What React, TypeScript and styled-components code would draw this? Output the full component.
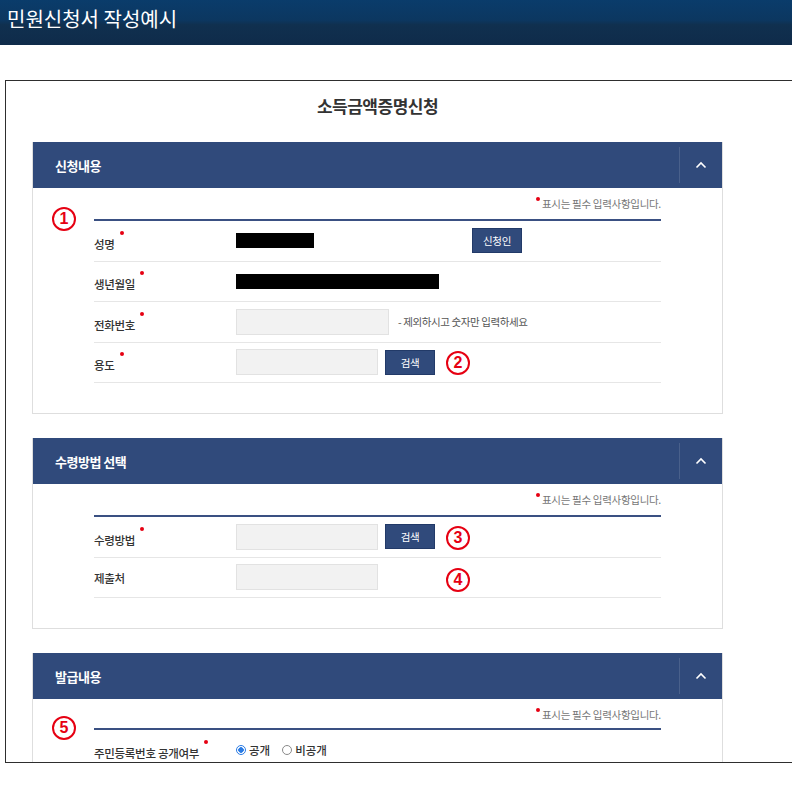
import React from 'react';
import styled, { createGlobalStyle } from 'styled-components';

const colors = {
  navy: '#304a7b',
  navyDark: '#223a68',
  red: '#e60012',
  text: '#333333',
  muted: '#777777',
  line: '#e6e6e6',
  inputBg: '#f2f2f2',
};

const GlobalStyle = createGlobalStyle`
  html, body {
    margin: 0;
    padding: 0;
    background: #ffffff;
    overflow: hidden;
    font-family: "Noto Sans CJK KR", "Noto Sans", sans-serif;
  }
`;

interface FieldRow {
  label: string;
  required?: boolean;
  content: React.ReactNode;
}

interface Annotation {
  num: number;
  left: number;
  top: number;
}

interface SectionProps {
  title: string;
  rows: FieldRow[];
  marks: Annotation[];
  noteGap?: number;
}

function Section({ title, rows, marks, noteGap = 8 }: SectionProps) {
  return (
    <Panel>
      <PanelHeader>
        <PanelTitle>{title}</PanelTitle>
        <ToggleArea>
          <svg width="12" height="8" viewBox="0 0 12 8">
            <polyline
              points="1.5,6.5 6,2 10.5,6.5"
              fill="none"
              stroke="#ffffff"
              strokeWidth="1.6"
            />
          </svg>
        </ToggleArea>
      </PanelHeader>
      <PanelBody>
        <Note noteGap={noteGap}>
          <RedDot /> 표시는 필수 입력사항입니다.
        </Note>
        <FieldTable>
          {rows.map((row) => (
            <Row key={row.label}>
              <Label>
                {row.label}
                {row.required && <RequiredDot />}
              </Label>
              <Value>{row.content}</Value>
            </Row>
          ))}
        </FieldTable>
        {marks.map((mark) => (
          <Marker key={mark.num} style={{ left: mark.left, top: mark.top }}>
            {mark.num}
          </Marker>
        ))}
      </PanelBody>
    </Panel>
  );
}

export default function App() {
  const applyRows: FieldRow[] = [
    {
      label: '성명',
      required: true,
      content: (
        <>
          <Redacted width={78} />
          <NavyButton style={{ marginLeft: 151 }}>신청인</NavyButton>
        </>
      ),
    },
    {
      label: '생년월일',
      required: true,
      content: <Redacted width={203} />,
    },
    {
      label: '전화번호',
      required: true,
      content: (
        <>
          <InputBox width={153} />
          <Hint>- 제외하시고 숫자만 입력하세요</Hint>
        </>
      ),
    },
    {
      label: '용도',
      required: true,
      content: (
        <>
          <InputBox width={142} />
          <NavyButton>검색</NavyButton>
        </>
      ),
    },
  ];

  const receiveRows: FieldRow[] = [
    {
      label: '수령방법',
      required: true,
      content: (
        <>
          <InputBox width={142} />
          <NavyButton>검색</NavyButton>
        </>
      ),
    },
    {
      label: '제출처',
      content: <InputBox width={142} />,
    },
  ];

  const issueRows: FieldRow[] = [
    {
      label: '주민등록번호 공개여부',
      required: true,
      content: (
        <RadioGroup>
          <RadioOption>
            <Radio checked />
            공개
          </RadioOption>
          <RadioOption>
            <Radio />
            비공개
          </RadioOption>
        </RadioGroup>
      ),
    },
  ];

  return (
    <>
      <GlobalStyle />
      <TopBar>
        <TopTitle>민원신청서 작성예시</TopTitle>
      </TopBar>
      <Frame>
        <Column>
          <PageTitle>소득금액증명신청</PageTitle>
          <Section
            title="신청내용"
            rows={applyRows}
            marks={[
              { num: 1, left: 19, top: 19 },
              { num: 2, left: 413, top: 163 },
            ]}
          />
          <Section
            title="수령방법 선택"
            rows={receiveRows}
            marks={[
              { num: 3, left: 413, top: 42 },
              { num: 4, left: 413, top: 84 },
            ]}
          />
          <Section
            title="발급내용"
            rows={issueRows}
            noteGap={6}
            marks={[{ num: 5, left: 19, top: 17 }]}
          />
        </Column>
      </Frame>
    </>
  );
}

const TopBar = styled.header`
  height: 45px;
  background: linear-gradient(#0a3c6b 0%, #0c3760 45%, #10304f 55%, #0f2b4a 100%);
  display: flex;
  align-items: flex-start;
`;

const TopTitle = styled.h1`
  margin: 0;
  padding: 5px 0 0 7px;
  font-size: 20px;
  line-height: 28px;
  font-weight: 400;
  color: #ffffff;
  letter-spacing: 0;
`;

const Frame = styled.main`
  margin: 35px 0 0 5px;
  width: 820px;
  height: 681px;
  border: 1px solid #2e2e2e;
  border-right: none;
  overflow: hidden;
  box-sizing: content-box;
`;

const Column = styled.div`
  width: 691px;
  margin-left: 26px;
  display: flex;
  flex-direction: column;
  gap: 24px;
`;

const PageTitle = styled.h2`
  margin: 13px 0 0;
  height: 24px;
  font-size: 17px;
  line-height: 24px;
  font-weight: 700;
  color: ${colors.text};
  text-align: center;
  letter-spacing: -0.5px;
`;

const Panel = styled.section`
  border: 1px solid #dedede;
  border-top: none;
  background: #ffffff;
`;

const PanelHeader = styled.div`
  height: 46px;
  background: ${colors.navy};
  display: flex;
  align-items: center;
  justify-content: space-between;
`;

const PanelTitle = styled.h3`
  margin: 0 0 0 22px;
  font-size: 13px;
  font-weight: 700;
  color: #ffffff;
  letter-spacing: -0.5px;
`;

const ToggleArea = styled.div`
  width: 42px;
  height: 36px;
  border-left: 1px solid rgba(255, 255, 255, 0.12);
  display: flex;
  align-items: center;
  justify-content: center;
`;

const PanelBody = styled.div`
  position: relative;
  padding: 9px 61px 30px;
`;

const Note = styled.p<{ noteGap: number }>`
  margin: 0 0 ${({ noteGap }) => noteGap}px;
  font-size: 10.5px;
  line-height: 14px;
  color: ${colors.muted};
  text-align: right;
  letter-spacing: -0.3px;
`;

const RedDot = styled.span`
  display: inline-block;
  width: 4px;
  height: 4px;
  border-radius: 50%;
  background: ${colors.red};
  vertical-align: 7px;
`;

const RequiredDot = styled(RedDot)`
  margin-left: 5px;
  vertical-align: 14px;
`;

const FieldTable = styled.div`
  border-top: 2px solid #3a5082;
`;

const Row = styled.div`
  display: grid;
  grid-template-columns: 142px 1fr;
  align-items: center;
  height: 40.5px;
  box-sizing: border-box;
  border-bottom: 1px solid ${colors.line};
`;

const Label = styled.div`
  font-size: 11.5px;
  font-weight: 500;
  color: ${colors.text};
  letter-spacing: -0.3px;
  padding-top: 1px;
`;

const Value = styled.div`
  display: flex;
  align-items: center;
  gap: 7px;
`;

const Redacted = styled.div<{ width: number }>`
  width: ${({ width }) => width}px;
  height: 15px;
  background: #000000;
`;

const InputBox = styled.div<{ width: number }>`
  width: ${({ width }) => width}px;
  height: 26px;
  box-sizing: border-box;
  background: ${colors.inputBg};
  border: 1px solid #e2e2e2;
`;

const NavyButton = styled.button`
  width: 50px;
  height: 25px;
  padding: 0;
  border: 1px solid ${colors.navyDark};
  background: ${colors.navy};
  color: #ffffff;
  font-family: inherit;
  font-size: 10.5px;
  letter-spacing: -0.3px;
`;

const Hint = styled.span`
  margin-left: 2px;
  font-size: 10.5px;
  color: #555555;
  letter-spacing: -0.4px;
`;

const RadioGroup = styled.div`
  display: flex;
  align-items: center;
  gap: 12px;
`;

const RadioOption = styled.label`
  display: flex;
  align-items: center;
  gap: 3px;
  font-size: 11.5px;
  font-weight: 500;
  color: ${colors.text};
`;

const Radio = styled.span<{ checked?: boolean }>`
  width: 10px;
  height: 10px;
  box-sizing: border-box;
  border-radius: 50%;
  border: 1px solid ${({ checked }) => (checked ? '#2a7be4' : '#8a8a8a')};
  background: ${({ checked }) =>
    checked ? 'radial-gradient(circle, #2a7be4 0 2.5px, #ffffff 3px)' : '#ffffff'};
`;

const Marker = styled.span`
  position: absolute;
  width: 24px;
  height: 24px;
  box-sizing: border-box;
  border: 2.8px solid ${colors.red};
  border-radius: 50%;
  display: flex;
  align-items: center;
  justify-content: center;
  color: ${colors.red};
  font-family: "Liberation Sans", Arial, sans-serif;
  font-weight: 700;
  font-size: 16px;
  line-height: 1;
`;
